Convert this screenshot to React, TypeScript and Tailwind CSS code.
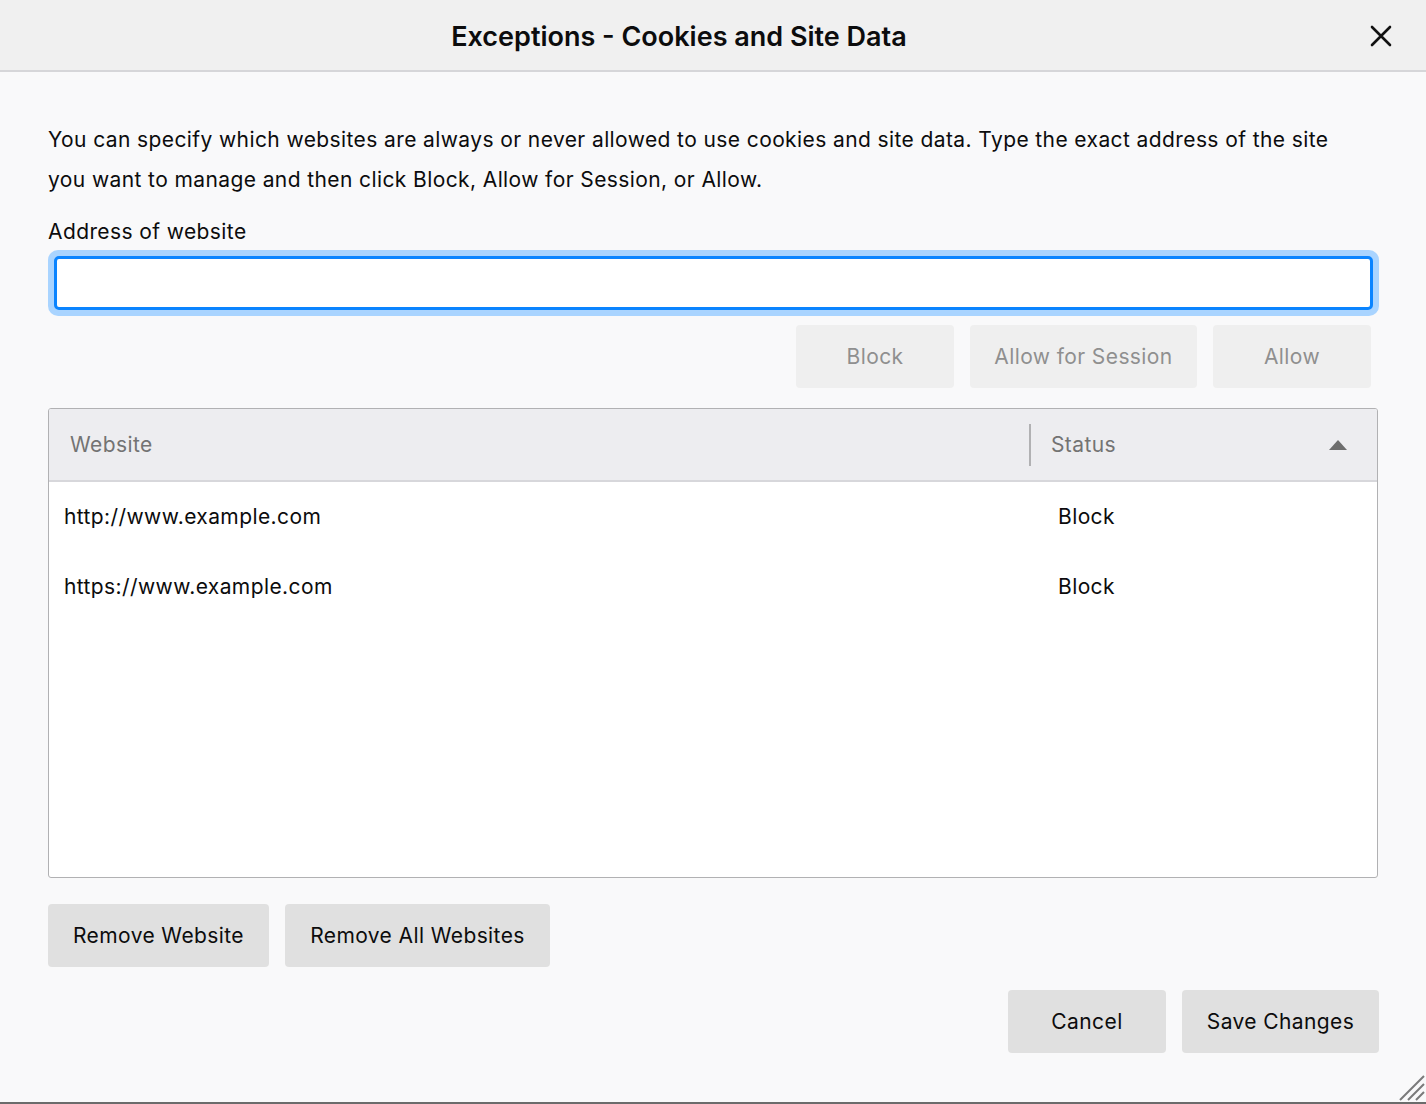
import React from "react";

const font = { fontFamily: "Inter, 'Noto Sans', sans-serif" };

function Btn({ label, disabled, className = "" }: { label: string; disabled?: boolean; className?: string }) {
  return (
    <button
      className={
        "h-[63px] rounded-[4px] text-[21px] tracking-[0.4px] flex items-center justify-center " +
        (disabled ? "bg-[#efefef] text-[#8f8f8f] " : "bg-[#e0e0e0] text-[#0c0c0d] ") +
        className
      }
    >
      {label}
    </button>
  );
}

export default function App() {
  const rows = [
    { site: "http://www.example.com", status: "Block" },
    { site: "https://www.example.com", status: "Block" },
  ];

  return (
    <div style={font} className="w-[1426px] h-[1104px] bg-[#f9f9fa] flex flex-col relative overflow-hidden text-[#0c0c0d]">
      {/* title bar */}
      <div className="h-[72px] shrink-0 bg-[#f0f0f0] border-b-2 border-[#d6d6d9] flex items-center justify-center pt-[5px] pr-[68px] relative">
        <h1 className="text-[27px] font-semibold tracking-[0px] text-[#0c0c0d]">Exceptions - Cookies and Site Data</h1>
        <button className="absolute right-[31px] top-[22px] w-[28px] h-[28px] flex items-center justify-center">
          <svg width="22" height="22" viewBox="0 0 22 22">
            <path d="M2 2 L20 20 M20 2 L2 20" stroke="#111" strokeWidth="2.6" strokeLinecap="round" />
          </svg>
        </button>
      </div>

      <div className="flex-1 flex flex-col px-[48px] pt-[48px] tracking-[0.4px]">
        <p className="text-[21px] leading-[40px] max-w-[1310px]">
          You can specify which websites are always or never allowed to use cookies and site data. Type the exact address of the site you want to manage and then click Block, Allow for Session, or Allow.
        </p>

        <label className="mt-[17px] text-[21px] leading-[30px]">Address of website</label>

        <div className="mt-[3px] h-[66px] rounded-[10px] bg-[#a9d4ff] p-[6px] mr-[-1px]">
          <input className="w-full h-full bg-white border-[3px] border-[#0a84ff] rounded-[5px] outline-none px-2 text-[21px]" />
        </div>

        <div className="mt-[9px] flex justify-end gap-[16px] pr-[7px]">
          <Btn label="Block" disabled className="w-[158px]" />
          <Btn label="Allow for Session" disabled className="w-[227px]" />
          <Btn label="Allow" disabled className="w-[158px]" />
        </div>

        <div className="mt-[20px] h-[470px] border border-[#b1b1b3] rounded-[3px] bg-white flex flex-col overflow-hidden">
          <div className="h-[73px] shrink-0 bg-[#ededf0] border-b-2 border-[#d7d7db] flex items-center text-[21px] text-[#737373]">
            <div className="w-[980px] pl-[21px] h-full flex items-center">Website</div>
            <div className="w-[2px] h-[42px] bg-[#b1b1b3]" />
            <div className="flex-1 pl-[20px] pr-[30px] flex items-center justify-between">
              <span>Status</span>
              <svg width="18" height="10" viewBox="0 0 18 10">
                <path d="M0 10 L9 0 L18 10 Z" fill="#6e6e6e" />
              </svg>
            </div>
          </div>
          <div className="flex flex-col">
            {rows.map((r) => (
              <div key={r.site} className="h-[70px] flex items-center text-[21px] text-[#0c0c0d]">
                <div className="w-[995px] pl-[15px]">{r.site}</div>
                <div className="pl-[14px]">{r.status}</div>
              </div>
            ))}
          </div>
        </div>

        <div className="mt-[26px] flex gap-[16px]">
          <Btn label="Remove Website" className="w-[221px]" />
          <Btn label="Remove All Websites" className="w-[265px]" />
        </div>

        <div className="mt-[23px] flex justify-end gap-[16px] mr-[-1px]">
          <Btn label="Cancel" className="w-[158px]" />
          <Btn label="Save Changes" className="w-[197px]" />
        </div>
      </div>

      {/* resize grip */}
      <svg className="absolute right-[1px] bottom-[3px]" width="26" height="26" viewBox="0 0 26 26">
        <path d="M1 25 L25 1 M9 25 L25 9 M17 25 L25 17" stroke="#7a7a7a" strokeWidth="2" />
      </svg>
      <div className="absolute left-0 right-0 bottom-0 h-[2px] bg-[#6b6b6b]" />
    </div>
  );
}
